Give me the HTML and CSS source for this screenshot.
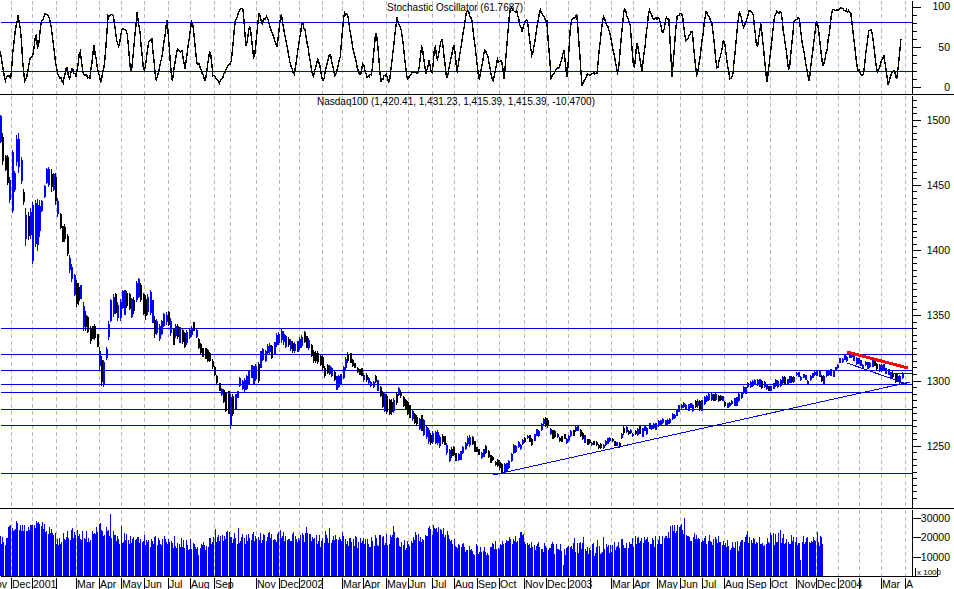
FILE: index.html
```html
<!DOCTYPE html>
<html lang="en">
<head>
    <meta charset="UTF-8">
    <title>Nasdaq100 chart</title>
    <link rel="stylesheet" href="styles.css">
</head>
<body>
    <div class="chart">
        <div class="pane pane-stoch">
            <svg id="stoch" class="plot" viewBox="0 0 954 94" width="954" height="94"></svg>
            <span class="pane-title title-stoch">Stochastic Oscillator (61.7687)</span>
        </div>
        <div class="pane pane-price">
            <svg id="price" class="plot" viewBox="0 95 954 413" width="954" height="413"></svg>
            <span class="pane-title title-price">Nasdaq100 (1,420.41, 1,431.23, 1,415.39, 1,415.39, -10.4700)</span>
        </div>
        <div class="pane pane-volume">
            <svg id="volume" class="plot" viewBox="0 509 954 68" width="954" height="68"></svg>
        </div>
        <svg id="dates" class="plot" viewBox="0 577 954 12" width="954" height="12"></svg>
    </div>
    <script src="chart.js"></script>
</body>
</html>
```

FILE: styles.css
```css
body {
    margin: 0;
    background-color: #fff;
    overflow: hidden;
}
.chart {
    width: 954px;
    height: 589px;
    display: flex;
    flex-direction: column;
    font-family: "Liberation Sans", Arial, sans-serif;
    color: #000;
}
.pane {
    position: relative;
}
.pane-stoch,
.pane-price {
    border-bottom: 1px solid #000;
}
.plot {
    display: block;
    shape-rendering: crispEdges;
}
.pane-title {
    position: absolute;
    font-size: 10px;
    line-height: 12px;
    white-space: nowrap;
}
.title-stoch {
    left: 387px;
    top: 2px;
}
.title-price {
    left: 317px;
    top: 1px;
}
.grid {
    stroke: #b9b9b9;
    stroke-dasharray: 4 3;
    fill: none;
}
.level {
    stroke: #0000e0;
    fill: none;
}
.trend-red {
    stroke: #ff0000;
    stroke-width: 3;
    fill: none;
}
.osc {
    stroke: #000;
    stroke-width: 1.4;
    fill: none;
}
.bars-black {
    fill: #000;
}
.bars-blue {
    fill: #0000ff;
}
.axis {
    stroke: #000;
    fill: none;
}
.label {
    font-size: 10.5px;
    fill: #000;
}
.label-end {
    text-anchor: end;
}
.label-small {
    font-size: 8px;
}
```

FILE: chart.js
```js
const SVG_NS = 'http://www.w3.org/2000/svg';

// gridlines, one per month tick
const ticks = [11, 32, 56, 76, 99, 121, 144, 168, 190, 214, 230, 256, 279, 299, 322, 342, 363, 386, 408, 432,
    454, 477, 499, 524, 546, 568, 590, 611, 633, 657, 680, 702, 724, 747, 770, 796, 816, 838, 859, 881, 905];
const tickNames = ['Dec', '2001', '', 'Mar', 'Apr', 'May', 'Jun', 'Jul', 'Aug', 'Sep', '', 'Nov', 'Dec', '2002', '',
    'Mar', 'Apr', 'May', 'Jun', 'Jul', 'Aug', 'Sep', 'Oct', 'Nov', 'Dec', '2003', '', 'Mar', 'Apr', 'May', 'Jun',
    'Jul', 'Aug', 'Sep', 'Oct', 'Nov', 'Dec', '2004', '', 'Mar', 'A'];

// stochastic line [x, y], read off the chart
const stochKeys = [[0,52],[2,63],[5,80],[7,75],[11,79],[13,50],[15,33],[18,15],[21,33],[23,67],[25,83],[27,75],[30,58],
    [33,55],[36,33],[38,52],[41,23],[45,15],[49,15],[52,33],[55,57],[57,72],[63,83],[67,65],[69,82],[72,68],[76,77],
    [80,50],[83,73],[90,78],[94,45],[98,72],[101,83],[105,60],[108,17],[113,13],[117,43],[119,46],[122,28],[127,30],
    [131,77],[137,13],[140,33],[144,75],[149,40],[152,40],[156,82],[162,57],[167,20],[172,82],[177,50],[182,52],
    [185,70],[192,18],[197,63],[200,66],[205,82],[210,50],[213,75],[220,83],[227,68],[231,63],[235,22],[240,8],
    [243,10],[246,47],[250,23],[254,62],[259,13],[262,23],[267,15],[272,33],[277,47],[281,13],[289,58],[294,77],
    [302,23],[305,30],[313,78],[318,57],[323,82],[330,52],[335,77],[340,58],[344,12],[348,17],[353,50],[360,78],
    [363,62],[367,78],[372,73],[376,28],[381,82],[386,73],[389,85],[397,18],[402,33],[407,80],[413,72],[418,75],
    [422,45],[426,76],[429,60],[432,75],[435,43],[437,62],[442,38],[447,80],[454,43],[457,72],[462,40],[467,10],
    [472,20],[479,82],[485,48],[488,58],[493,83],[497,60],[502,62],[504,80],[510,8],[517,12],[522,32],[527,17],
    [532,58],[540,10],[547,22],[551,78],[560,65],[564,50],[567,80],[571,20],[577,15],[582,85],[587,75],[597,73],
    [603,15],[610,33],[618,75],[624,8],[630,23],[634,73],[637,40],[639,52],[642,72],[649,10],[654,20],[659,17],
    [663,35],[666,18],[669,20],[672,77],[677,15],[682,12],[686,43],[692,30],[697,80],[706,10],[712,23],[717,70],
    [724,39],[730,82],[733,73],[739,10],[744,28],[749,12],[753,13],[757,50],[761,23],[767,83],[775,13],[781,12],
    [789,73],[794,22],[799,17],[802,42],[809,81],[817,18],[823,68],[827,50],[832,10],[842,8],[851,13],[857,67],
    [863,78],[869,28],[872,32],[877,73],[884,55],[888,83],[894,68],[897,80],[901,38]];

// price bars [x, top, bottom]
const priceKeys = [[0,115,140],[2,130,160],[4,150,170],[6,165,180],[8,142,190],[10,200,218],[11.5,150,210],[13,190,203],
    [15,142,183],[17,130,150],[18.5,133,170],[21,160,183],[22.5,183,200],[24,200,225],[26,212,250],[28,212,235],
    [31,205,240],[33,200,272],[35,200,240],[38,198,247],[41,203,215],[43,187,198],[45,180,197],[46,168,183],
    [48,168,185],[49,163,192],[52,175,202],[53,173,192],[55,172,210],[57,187,207],[58,210,225],[60,213,232],
    [63,233,253],[65,218,235],[68,248,270],[72,270,290],[77,283,308],[80,280,293],[83,302,330],[87,315,333],
    [90,330,347],[95,323,337],[97,337,353],[100,355,383],[103,360,385],[106,348,362],[107,328,347],[110,302,323],
    [114,288,313],[118,303,320],[123,288,313],[128,293,310],[133,300,320],[137,273,292],[140,283,307],[145,297,320],
    [150,290,317],[154,317,337],[160,323,337],[167,307,323],[172,327,343],[178,323,337],[185,335,350],[192,322,332],
    [197,333,343],[202,350,360],[208,350,363],[213,363,372],[218,380,387],[222,390,400],[230,393,425],[237,393,400],
    [239,378,390],[245,380,393],[250,367,382],[257,363,383],[260,352,367],[267,345,357],[273,342,355],[280,327,340],
    [287,335,347],[293,343,353],[300,337,350],[305,332,343],[313,350,363],[320,353,367],[325,365,378],[330,363,373],
    [335,377,390],[341,373,385],[344,360,373],[348,352,365],[353,362,368],[360,368,375],[365,372,382],[372,383,390],
    [375,375,383],[381,388,403],[388,397,417],[393,397,412],[397,387,397],[402,393,403],[408,403,417],[415,417,428],
    [422,417,432],[428,430,445],[435,432,448],[443,433,443],[449,448,462],[452,443,452],[456,455,463],[462,447,455],
    [467,437,447],[473,435,447],[476,447,452],[480,452,458],[485,445,455],[490,453,460],[495,462,468],[500,460,470],
    [506,465,473],[511,450,460],[515,443,452],[520,442,448],[527,432,437],[532,437,445],[537,430,438],[542,420,428],
    [547,418,427],[550,428,437],[557,435,440],[567,437,443],[572,428,435],[578,426,432],[583,435,443],[588,438,443],
    [593,443,447],[600,443,450],[607,439,445],[612,438,443],[618,443,448],[623,428,437],[628,428,433],[635,432,437],
    [639,428,437],[650,424,430],[660,420,426],[670,416,422],[680,405,411],[690,402,408],[700,400,412],[707,393,400],
    [713,393,402],[720,397,403],[730,403,408],[738,393,402],[745,385,392],[753,382,388],[762,378,388],[768,388,393],
    [775,378,385],[788,377,385],[797,372,377],[807,378,383],[815,372,378],[823,373,382],[833,368,373],[842,357,363],
    [848,353,358],[857,358,365],[863,362,368],[873,360,368],[882,363,370],[888,372,379],[897,373,383],[903,373,380]];

// volume tops [x, y]
const volumeKeys = [[0,539],[5,540],[10,524],[20,528],[33,526],[50,531],[56,541],[75,533],[90,538],[100,528],[115,538],
    [140,540],[165,542],[190,544],[197,551],[215,540],[225,536],[240,540],[256,538],[280,536],[300,537],[320,541],
    [342,539],[360,544],[385,540],[395,536],[405,546],[418,538],[432,530],[445,531],[455,544],[476,550],[485,553],
    [500,542],[523,537],[533,547],[543,546],[553,548],[563,550],[570,548],[587,548],[600,552],[620,544],[640,540],
    [660,542],[672,530],[684,528],[692,538],[720,542],[734,548],[750,540],[770,540],[800,539],[823,541]];
const volumeSpikes = {33: 514, 110: 514, 121: 526, 342: 532, 393: 526, 431: 523, 540: 530, 684: 518, 747: 531, 817: 532, 800: 560, 736: 566, 563: 565};

// small repeatable random source, the bars only need to look right
let seed = 20040;
function rnd() {
    seed = (seed * 16807) % 2147483647;
    return seed / 2147483647;
}

function el(parent, name, attrs, text) {
    const node = document.createElementNS(SVG_NS, name);
    for (const key in attrs) {
        node.setAttribute(key, attrs[key]);
    }
    if (text !== undefined) node.textContent = text;
    parent.appendChild(node);
    return node;
}

function line(parent, cls, x1, y1, x2, y2) {
    return el(parent, 'line', {class: cls, x1: x1 + 0.5, y1: y1 + 0.5, x2: x2 + 0.5, y2: y2 + 0.5});
}

function label(parent, x, y, text, cls) {
    return el(parent, 'text', {class: 'label ' + (cls || ''), x: x, y: y}, text);
}

// value at x on a list of [x, a, b, ...] keys
function interp(keys, x, col) {
    for (let i = 1; i < keys.length; i++) {
        if (x <= keys[i][0]) {
            const a = keys[i - 1];
            const b = keys[i];
            return a[col] + (b[col] - a[col]) * (x - a[0]) / (b[0] - a[0]);
        }
    }
    return keys[keys.length - 1][col];
}

function drawGrid(svg, top, bottom) {
    ticks.forEach(x => line(svg, 'grid', x, top, x, bottom));
}

function drawStoch() {
    const svg = document.getElementById('stoch');
    drawGrid(svg, 0, 94);
    line(svg, 'level', 0, 22, 912, 22);
    line(svg, 'level', 0, 71, 912, 71);

    const pts = [];
    for (let x = 0; x <= 901; x += 1.07) {
        const y = interp(stochKeys, x, 1) + (rnd() - 0.5) * 3;
        pts.push(x.toFixed(1) + ',' + y.toFixed(1));
    }
    el(svg, 'polyline', {class: 'osc', points: pts.join(' ')});

    line(svg, 'axis', 912, 0, 912, 94);
    for (let v = 0; v <= 100; v += 10) {
        const y = Math.round(86.5 - v * 0.8);
        line(svg, 'axis', 912, y, v % 50 === 0 ? 920 : 916, y);
    }
    label(svg, 950, 10, '100', 'label-end');
    label(svg, 950, 51, '50', 'label-end');
    label(svg, 950, 91, '0', 'label-end');
}

function drawPrice() {
    const svg = document.getElementById('price');
    drawGrid(svg, 95, 507);
    [328, 354, 370, 384, 392, 409, 425, 473].forEach(y => line(svg, 'level', 0, y, 912, y));

    let black = '';
    let blue = '';
    for (let x = 0; x <= 903; x += 2.3) {
        const hi = interp(priceKeys, x, 1);
        const lo = interp(priceKeys, x, 2);
        const shift = x < 60 ? 0 : (rnd() - 0.5) * 5;
        const top = Math.round(hi + shift);
        const h = Math.max(4, Math.round((lo - hi) * (0.8 + rnd() * 0.35)));
        const wick = Math.round(h * 0.2 * rnd());
        const px = Math.round(x);
        const falling = interp(priceKeys, x + 4, 1) > interp(priceKeys, Math.max(0, x - 4), 1);
        let pBlack = falling ? 0.7 : 0.25;
        if (x > 640) pBlack *= 0.3;
        // body two pixels wide, thin tail at the bottom or top
        const d = 'M' + px + ' ' + top + 'h1v' + h + 'h-1z' +
            'M' + (px + 1) + ' ' + (top + wick) + 'h1v' + (h - wick * 2) + 'h-1z';
        if (rnd() < pBlack) black += d; else blue += d;
    }
    el(svg, 'path', {class: 'bars-black', d: black});
    el(svg, 'path', {class: 'bars-blue', d: blue});

    // hand drawn trend lines
    const trends = el(svg, 'g', {style: 'shape-rendering:crispEdges'});
    el(trends, 'line', {class: 'level', x1: 493, y1: 475, x2: 910, y2: 382});
    el(trends, 'line', {class: 'level', x1: 847, y1: 363, x2: 907, y2: 384});
    el(trends, 'line', {class: 'level', x1: 888, y1: 373.5, x2: 912, y2: 373.5});
    el(trends, 'line', {class: 'trend-red', x1: 847, y1: 352, x2: 908, y2: 368});

    line(svg, 'axis', 912, 95, 912, 507);
    for (let v = 1210; v <= 1530; v += 5) {
        const y = Math.round(380.5 + (1300 - v) * 1.304);
        if (y < 95 || y > 507) continue;
        line(svg, 'axis', 912, y, v % 50 === 0 ? 920 : 916, y);
        if (v % 50 === 0) label(svg, 950, y + 4, String(v), 'label-end');
    }
}

function drawVolume() {
    const svg = document.getElementById('volume');
    drawGrid(svg, 509, 575);

    let bars = '';
    for (let x = 0; x <= 823; x += 1.16) {
        const px = Math.round(x);
        let top = interp(volumeKeys, x, 1) + (rnd() - 0.5) * 12;
        if (rnd() < 0.1) top -= rnd() * 10;
        if (volumeSpikes[px]) top = volumeSpikes[px];
        top = Math.round(top);
        bars += 'M' + px + ' ' + top + 'h1v' + (576 - top) + 'h-1z';
    }
    el(svg, 'path', {class: 'bars-blue', d: bars});

    line(svg, 'axis', 0, 576, 937, 576);
    line(svg, 'axis', 912, 509, 912, 576);
    [[518, '30000'], [537, '20000'], [557, '10000']].forEach(t => {
        line(svg, 'axis', 912, t[0], 920, t[0]);
        label(svg, 950, t[0] + 4, t[1], 'label-end');
    });
    line(svg, 'axis', 915, 567, 915, 576);
    line(svg, 'axis', 937, 567, 937, 576);
    label(svg, 917, 575, 'x 1000', 'label-small');
}

function drawDates() {
    const svg = document.getElementById('dates');
    label(svg, -4, 588, 'ov');
    ticks.forEach((x, i) => {
        line(svg, 'axis', x, 577, x, 589);
        if (tickNames[i]) label(svg, x + 1, 588, tickNames[i]);
    });
}

drawStoch();
drawPrice();
drawVolume();
drawDates();
```
